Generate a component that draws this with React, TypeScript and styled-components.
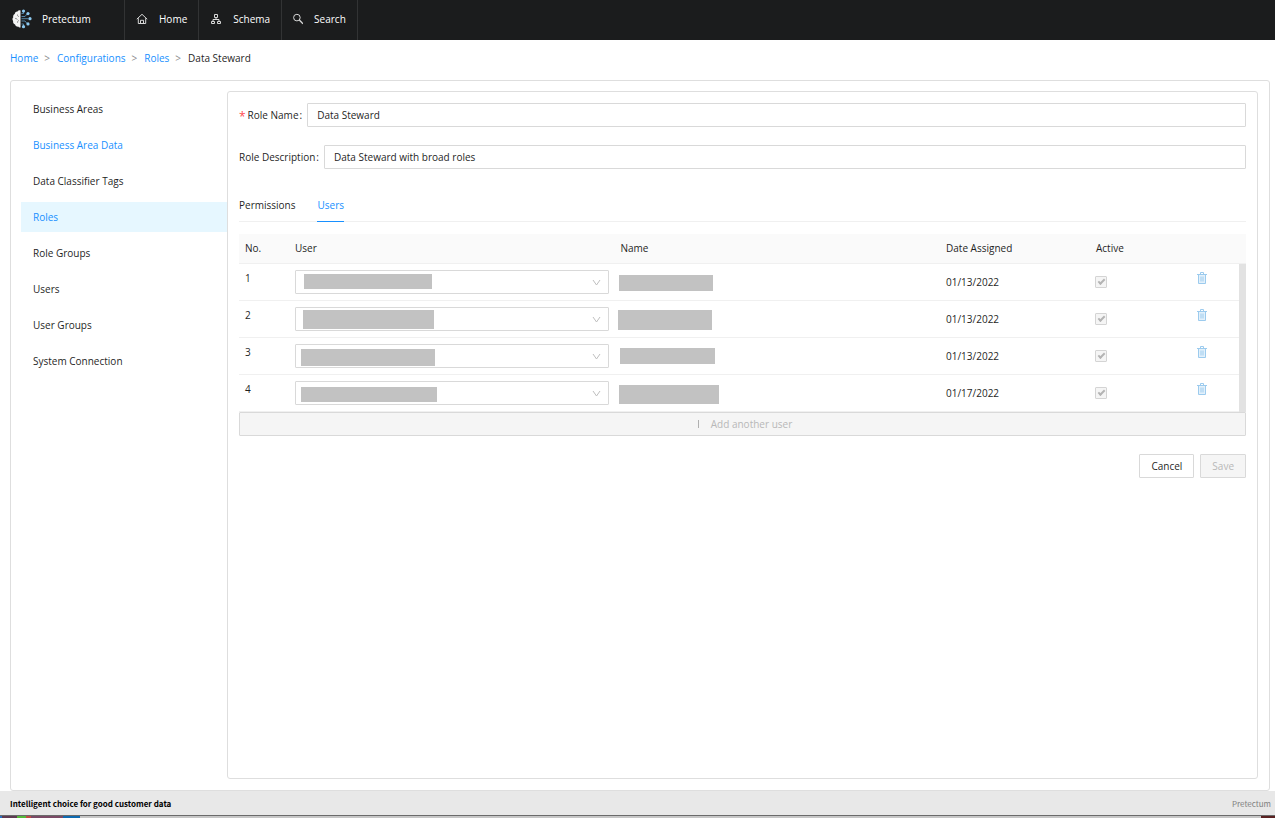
import React, { useState } from 'react';
import styled, { createGlobalStyle } from 'styled-components';

const GlobalStyle = createGlobalStyle`
  *, *::before, *::after { box-sizing: border-box; }
  body {
    margin: 0;
    background: #fff;
    color: #1f1f1f;
    font-family: 'Open Sans', 'Noto Sans', sans-serif;
    font-size: 10px;
    line-height: 16px;
  }
  button, input, select { font: inherit; color: inherit; margin: 0; }
  a { color: inherit; text-decoration: none; }
  ul, ol { list-style: none; margin: 0; padding: 0; }
`;

const Page = styled.div`
  display: flex;
  flex-direction: column;
  min-height: 100vh;
`;

const TopBar = styled.header`
  display: flex;
  height: 40px;
  background: #1b1c1d;
  color: #fff;
`;

const Brand = styled.a`
  display: flex;
  align-items: center;
  gap: 10px;
  width: 125px;
  padding: 0 0 2px 12px;
  border-right: 1px solid #323334;
`;

const TopNav = styled.nav`
  display: flex;
`;

const TopLink = styled.a`
  display: flex;
  align-items: center;
  gap: 11px;
  padding: 0 11px 2px;
  border-right: 1px solid #323334;
`;

const Crumbs = styled.ol`
  display: flex;
  gap: 7px;
  padding: 10px 10px 14px;
`;

const Crumb = styled.li`
  display: flex;
  gap: 6px;

  &:not(:last-child)::after {
    content: '>';
    color: #8c8c8c;
  }

  a { color: #1890ff; }
`;

const Workspace = styled.main`
  flex: 1;
  display: flex;
  margin: 0 5px 0 10px;
  padding: 10px 11px 11px 10px;
  border: 1px solid #dedede;
  border-radius: 3px;
`;

const SideMenu = styled.nav`
  flex: 0 0 206px;
  padding-top: 3px;

  ul {
    display: flex;
    flex-direction: column;
    gap: 6px;
  }
`;

const SideLink = styled.a<{ $tone?: 'link' | 'selected' }>`
  display: block;
  padding: 7px 12px;
  color: ${p => (p.$tone ? '#1890ff' : 'inherit')};
  background: ${p => (p.$tone === 'selected' ? '#e6f7ff' : 'transparent')};
`;

const Panel = styled.section`
  flex: 1;
  min-width: 0;
  padding: 11px;
  border: 1px solid #dedede;
  border-radius: 3px;
`;

const Field = styled.div`
  display: flex;
  align-items: center;
  gap: 5px;
  margin-bottom: 18px;
`;

const FieldLabel = styled.label<{ $required?: boolean }>`
  white-space: nowrap;

  &::before {
    content: ${p => (p.$required ? "'*'" : 'none')};
    margin-right: 2px;
    color: #ff4d4f;
    font-size: 12px;
    line-height: 10px;
    vertical-align: -2px;
  }

  &::after {
    content: ':';
    margin-left: 1px;
  }
`;

const TextInput = styled.input`
  flex: 1;
  min-width: 0;
  height: 24px;
  padding: 0 9px;
  border: 1px solid #d9d9d9;
  border-radius: 1px;
  outline: none;
`;

const Tabs = styled.div`
  display: flex;
  gap: 22px;
  margin: 24px 0 12px;
  border-bottom: 1px solid #f0f0f0;
`;

const Tab = styled.button<{ $active: boolean }>`
  margin-bottom: -1px;
  padding: 4px 0 8px;
  border: 0;
  border-bottom: 1px solid ${p => (p.$active ? '#1890ff' : 'transparent')};
  background: none;
  color: ${p => (p.$active ? '#1890ff' : 'inherit')};
`;

const TableFrame = styled.div`
  display: grid;
  grid-template-columns: minmax(0, 1fr) 7px;
`;

const UserTable = styled.table`
  width: 100%;
  table-layout: fixed;
  border-collapse: separate;
  border-spacing: 0;
`;

const HeadCell = styled.th<{ $width?: number }>`
  width: ${p => (p.$width ? `${p.$width}px` : 'auto')};
  height: 30px;
  padding: 0 6px 2px;
  border-bottom: 1px solid #f0f0f0;
  background: #fafafa;
  font-weight: 400;
  text-align: left;
`;

const Cell = styled.td<{ $top?: boolean; $center?: boolean }>`
  height: 37px;
  padding: ${p => (p.$top ? '6px' : '0 6px')};
  border-bottom: 1px solid #f0f0f0;
  vertical-align: ${p => (p.$top ? 'top' : 'middle')};
  text-align: ${p => (p.$center ? 'center' : 'left')};
`;

const Rail = styled.div`
  display: flex;
  flex-direction: column;
`;

const RailHead = styled.div`
  height: 30px;
  border-bottom: 1px solid #f0f0f0;
  background: #fafafa;
`;

const RailTrack = styled.div`
  flex: 1;
  background: #e2e2e2;
`;

const Overlay = styled.div`
  position: relative;
  height: 24px;
`;

const UserSelect = styled.select`
  display: block;
  width: 100%;
  height: 24px;
  border: 1px solid #d9d9d9;
  border-radius: 1px;
  background: #fff;
  appearance: none;
`;

const Arrow = styled.svg`
  position: absolute;
  top: 9px;
  right: 8px;
  pointer-events: none;
`;

type Box = [left: number, top: number, width: number, height: number];

const Redaction = styled.span<{ $box: Box }>`
  position: absolute;
  left: ${p => p.$box[0]}px;
  top: ${p => p.$box[1]}px;
  width: ${p => p.$box[2]}px;
  height: ${p => p.$box[3]}px;
  background: #c2c2c2;
  pointer-events: none;
`;

const Tick = styled.input`
  display: grid;
  place-items: center;
  width: 12px;
  height: 12px;
  border: 1px solid #d4d4d4;
  border-radius: 1px;
  background: #f5f5f5;
  appearance: none;

  && { margin-left: -1px; }

  &:checked::before {
    content: '';
    width: 7px;
    height: 4px;
    margin-top: -2px;
    border: solid #b4b4b4;
    border-width: 0 0 2px 2px;
    transform: rotate(-45deg);
  }
`;

const IconButton = styled.button`
  padding: 2px 0;
  border: 0;
  background: none;
  line-height: 0;
`;

const Button = styled.button`
  height: 24px;
  padding: 0 11px;
  border: 1px solid #d9d9d9;
  border-radius: 1px;
  background: #fff;

  &:disabled {
    background: #f5f5f5;
    color: #b8b8b8;
  }
`;

const AddButton = styled(Button)`
  display: flex;
  align-items: center;
  justify-content: center;
  gap: 7px;
  width: 100%;
`;

const AddMark = styled.span`
  width: 1px;
  height: 8px;
  margin: 0 5px;
  background: #b0b0b0;
`;

const Actions = styled.div`
  display: flex;
  justify-content: flex-end;
  gap: 6px;
  margin-top: 18px;
`;

const Footer = styled.footer`
  display: flex;
  align-items: center;
  justify-content: space-between;
  height: 24px;
  padding: 1px 4px 0 10px;
  background: #e8e8e8;
  color: #808080;
  font-family: 'Noto Sans CJK JP', 'Open Sans', sans-serif;
  font-size: 8px;

  strong { color: #000; }
`;

const Taskbar = styled.div`
  display: flex;
  height: 3px;
  border-top: 1px solid #6b6b6b;
  background: #c6c6c6;
`;

const Swatch = styled.span<{ $color: string; $width?: number }>`
  flex: ${p => (p.$width ? `0 0 ${p.$width}px` : '1')};
  background: ${p => p.$color};
`;

const Logo = () => (
  <svg width="20" height="20" viewBox="0 0 20 20" aria-hidden="true">
    <path
      d="M8.500 1.400C7.400.9 6.200 1.300 5.500 2.400 4 2.300 2.800 3.400 2.800 4.900 1.400 5.500.8 7 1.300 8.300.3 9.300.2 10.900 1.100 12c-.3 1.600.6 3 2 3.400.3 1.500 1.600 2.400 3 2.200.6.8 1.500 1.200 2.400.8z"
      fill="#f4f4f4"
    />
    <path d="M5.500 5.500c-.3 1.200.5 2 1.500 2M3 9.500c1.200-.2 2 .2 2.300 1.200M7 11.500c-1.200.2-1.700 1.200-1.400 2.300" fill="none" stroke="#777" strokeWidth=".8" />
    <g stroke="#5f9cc4" strokeWidth=".8" fill="none">
      <path d="M9.500 4.500h2v-2M9.500 7.500h3.500l2.500-3M9.500 9.700h7M9.500 12h3.500l2.500 3M9.500 15h2v2" />
    </g>
    <g fill="#8cc8ee">
      <circle cx="11.500" cy="2" r="1.600" />
      <circle cx="16" cy="4.600" r="1.600" />
      <circle cx="18" cy="9.700" r="1.600" />
      <circle cx="16" cy="14.900" r="1.600" />
      <circle cx="11.500" cy="17.700" r="1.600" />
    </g>
  </svg>
);

const HomeIcon = () => (
  <svg width="12" height="12" viewBox="0 0 12 12" fill="none" stroke="#d8d8d8" aria-hidden="true">
    <path d="M.8 6.200 6 1.300l5.200 4.900M2.300 5.200v5.300h7.400V5.200M4.500 10.400V7.300h3v3.100" />
  </svg>
);

const SchemaIcon = () => (
  <svg width="12" height="12" viewBox="0 0 12 12" fill="none" stroke="#d8d8d8" aria-hidden="true">
    <path d="M4.500 1.500h3v3h-3zM1.500 8.500h3v2h-3zM7.500 8.500h3v2h-3zM6 4.500v2M3 8.500v-2h6v2" />
  </svg>
);

const SearchIcon = () => (
  <svg width="10" height="12" viewBox="0 0 10 12" fill="none" stroke="#d8d8d8" aria-hidden="true">
    <circle cx="3.900" cy="4.600" r="3.300" />
    <path d="M6.300 7 10 10.800" strokeWidth="1.300" />
  </svg>
);

const TrashIcon = () => (
  <svg width="10" height="12" viewBox="0 0 10 12" aria-hidden="true">
    <path d="M1.500 3h7v8.500h-7z" fill="#e3f1fb" />
    <path d="M0 2.500h10M3.500 2.300V.5h3v1.800M1.500 2.500v9h7v-9M4 4.500v5M6 4.500v5" fill="none" stroke="#9ccbee" />
  </svg>
);

const topLinks = [
  { label: 'Home', Icon: HomeIcon },
  { label: 'Schema', Icon: SchemaIcon },
  { label: 'Search', Icon: SearchIcon },
];

const sideLinks: { label: string; tone?: 'link' | 'selected' }[] = [
  { label: 'Business Areas' },
  { label: 'Business Area Data', tone: 'link' },
  { label: 'Data Classifier Tags' },
  { label: 'Roles', tone: 'selected' },
  { label: 'Role Groups' },
  { label: 'Users' },
  { label: 'User Groups' },
  { label: 'System Connection' },
];

const users: { date: string; user: Box; name: Box }[] = [
  { date: '01/13/2022', user: [9, 4, 128, 15], name: [-2, 5, 94, 16] },
  { date: '01/13/2022', user: [8, 3, 131, 19], name: [-3, 3, 94, 20] },
  { date: '01/13/2022', user: [6, 5, 134, 17], name: [-1, 4, 95, 16] },
  { date: '01/17/2022', user: [6, 6, 136, 15], name: [-2, 4, 100, 19] },
];

const tabs = ['Permissions', 'Users'];

export default function App() {
  const [tab, setTab] = useState('Users');
  const [roleName, setRoleName] = useState('Data Steward');
  const [description, setDescription] = useState('Data Steward with broad roles');

  return (
    <>
      <GlobalStyle />
      <Page>
        <TopBar>
          <Brand href="#">
            <Logo />
            Pretectum
          </Brand>
          <TopNav aria-label="Main">
            {topLinks.map(({ label, Icon }) => (
              <TopLink key={label} href="#">
                <Icon />
                {label}
              </TopLink>
            ))}
          </TopNav>
        </TopBar>

        <nav aria-label="Breadcrumb">
          <Crumbs>
            <Crumb><a href="#">Home</a></Crumb>
            <Crumb><a href="#">Configurations</a></Crumb>
            <Crumb><a href="#">Roles</a></Crumb>
            <Crumb aria-current="page">Data Steward</Crumb>
          </Crumbs>
        </nav>

        <Workspace>
          <SideMenu aria-label="Configurations">
            <ul>
              {sideLinks.map(({ label, tone }) => (
                <li key={label}>
                  <SideLink href="#" $tone={tone}>{label}</SideLink>
                </li>
              ))}
            </ul>
          </SideMenu>

          <Panel>
            <Field>
              <FieldLabel htmlFor="role-name" $required>Role Name</FieldLabel>
              <TextInput id="role-name" value={roleName} onChange={e => setRoleName(e.target.value)} />
            </Field>
            <Field>
              <FieldLabel htmlFor="role-description">Role Description</FieldLabel>
              <TextInput id="role-description" value={description} onChange={e => setDescription(e.target.value)} />
            </Field>

            <Tabs role="tablist">
              {tabs.map(name => (
                <Tab key={name} role="tab" aria-selected={tab === name} $active={tab === name} onClick={() => setTab(name)}>
                  {name}
                </Tab>
              ))}
            </Tabs>

            <TableFrame>
              <UserTable>
                <thead>
                  <tr>
                    <HeadCell $width={50}>No.</HeadCell>
                    <HeadCell>User</HeadCell>
                    <HeadCell>Name</HeadCell>
                    <HeadCell $width={150}>Date Assigned</HeadCell>
                    <HeadCell $width={75}>Active</HeadCell>
                    <HeadCell $width={74} />
                  </tr>
                </thead>
                <tbody>
                  {users.map(({ date, user, name }, i) => (
                    <tr key={i}>
                      <Cell $top>{i + 1}</Cell>
                      <Cell>
                        <Overlay>
                          <UserSelect aria-label={`User ${i + 1}`} />
                          <Redaction $box={user} />
                          <Arrow width="9" height="7" viewBox="0 0 9 7" fill="none" stroke="#bfbfbf">
                            <path d="M1 1 4.500 6 8 1" />
                          </Arrow>
                        </Overlay>
                      </Cell>
                      <Cell>
                        <Overlay><Redaction $box={name} /></Overlay>
                      </Cell>
                      <Cell>{date}</Cell>
                      <Cell><Tick type="checkbox" checked disabled readOnly aria-label={`Active ${i + 1}`} /></Cell>
                      <Cell $top $center>
                        <IconButton aria-label={`Remove user ${i + 1}`}><TrashIcon /></IconButton>
                      </Cell>
                    </tr>
                  ))}
                </tbody>
              </UserTable>
              <Rail>
                <RailHead />
                <RailTrack />
              </Rail>
            </TableFrame>
            <AddButton disabled>
              <AddMark />
              Add another user
            </AddButton>

            <Actions>
              <Button>Cancel</Button>
              <Button disabled>Save</Button>
            </Actions>
          </Panel>
        </Workspace>

        <Footer>
          <strong>Intelligent choice for good customer data</strong>
          <span>Pretectum</span>
        </Footer>
        <Taskbar>
          <Swatch $color="#2a6fc0" $width={2} />
          <Swatch $color="#5d3a52" $width={15} />
          <Swatch $color="#55b83a" $width={9} />
          <Swatch $color="#c04a44" $width={5} />
          <Swatch $color="#7a4a66" $width={32} />
          <Swatch $color="#0f6ab0" $width={17} />
          <Swatch $color="#c6c6c6" />
          <Swatch $color="#5a2222" $width={14} />
        </Taskbar>
      </Page>
    </>
  );
}
